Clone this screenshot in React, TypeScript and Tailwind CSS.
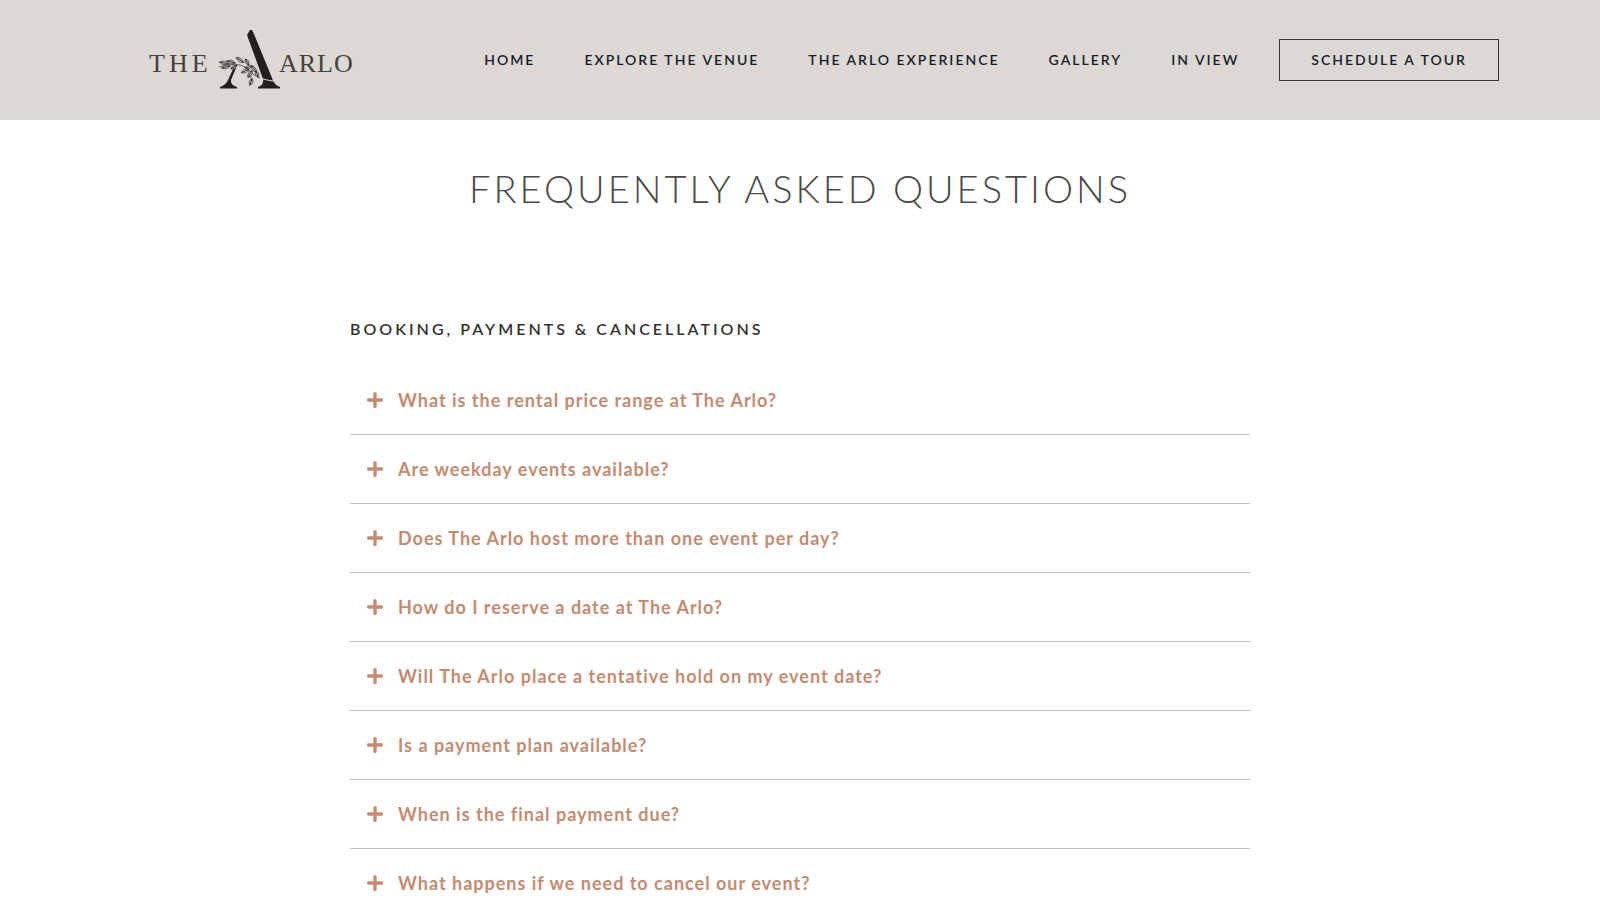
import { useState } from "react";
import { FaPlus } from "react-icons/fa";

const navItems = ["Home", "Explore the Venue", "The Arlo Experience", "Gallery", "In View"];

const questions = [
  "What is the rental price range at The Arlo?",
  "Are weekday events available?",
  "Does The Arlo host more than one event per day?",
  "How do I reserve a date at The Arlo?",
  "Will The Arlo place a tentative hold on my event date?",
  "Is a payment plan available?",
  "When is the final payment due?",
  "What happens if we need to cancel our event?",
];

// [x, y, rotation, length] of each leaf on the sprig
const leaves: [number, number, number, number][] = [
  [84, 43, 10, 9],
  [86, 47, -14, 9],
  [91, 42, 12, 9],
  [94, 47, -30, 7],
  [100, 40, 34, 9],
  [107, 42, 60, 7],
  [105, 51, -24, 8],
  [110, 54, -58, 8],
  [114, 49, 56, 8],
  [109, 47, -10, 7],
  [111, 62, -70, 7],
  [117, 54, 70, 7],
];

function Logo() {
  return (
    <svg width="220" height="80" viewBox="0 0 220 80" role="img" aria-label="The Arlo">
      <g fill="#46413d" fontFamily="'Liberation Serif', serif" fontSize="26">
        <text x="9" y="52" letterSpacing="4">THE</text>
        <text x="139" y="52" letterSpacing="1">ARLO</text>
      </g>
      <g fill="#231f1c">
        <path d="M107 15 L110 10 H112 L114 14 L132 58 Q134 65 140 67 V68.500 H118 V67 Q124 65 123 59 Z" />
        <path d="M94 47 L96 48 L91 60 Q90 65 97 67 V68.500 H80 V67 Q86 65 88 60 Z" />
      </g>
      <g fill="none" stroke="#35302c" strokeWidth="0.7">
        <path d="M115 55 Q120 59 127 60 Q133 61 139 62" stroke="#dcd8d3" strokeWidth="1" />
        <path d="M79 47 Q96 41 107 48 Q113 56 120 58" />
        <path d="M104 47 Q112 50 111 64" />
        {leaves.map(([x, y, angle, length]) => (
          <g key={`${x}-${y}`} transform={`translate(${x} ${y}) rotate(${angle})`}>
            <path
              d={`M${-length / 2} 0 Q0 -3.400 ${length / 2} 0 Q0 3.400 ${-length / 2} 0 Z`}
              fill="#dcd8d3"
            />
            <path d={`M${-length / 2} 0 H${length / 2}`} strokeWidth="0.9" />
          </g>
        ))}
      </g>
    </svg>
  );
}

export default function App() {
  const [selected, setSelected] = useState<number | null>(null);

  return (
    <div className="min-h-screen overflow-x-hidden bg-white font-['Lato',sans-serif]">
      <header className="flex min-h-[120px] items-center justify-between bg-[#dcd8d3] pr-[101px] pl-[140px]">
        <a href="#home" aria-label="The Arlo">
          <Logo />
        </a>
        <div className="flex items-center gap-10 text-sm font-semibold tracking-[2px] whitespace-nowrap text-[#161c2d] uppercase">
          <nav className="flex items-center gap-[49px]">
            {navItems.map((item) => (
              <a key={item} href="#home">
                {item}
              </a>
            ))}
          </nav>
          <a href="#tour" className="border border-[#3a3634] px-[31px] py-[10px]">
            Schedule a Tour
          </a>
        </div>
      </header>

      <main>
        <h1 className="mt-10 text-center text-[38px] leading-[56px] font-light tracking-[3px] text-[#4a4a4a] uppercase">
          Frequently Asked Questions
        </h1>

        <section className="mx-auto mt-[101px] max-w-[900px]">
          <h2 className="text-base leading-6 font-semibold tracking-[3px] text-[#333230] uppercase">
            Booking, Payments &amp; Cancellations
          </h2>
          <ul className="mt-[25px]">
            {questions.map((question, index) => (
              <li key={question} className="border-b border-[#bfbfbf]">
                <button
                  type="button"
                  aria-expanded={selected === index}
                  onClick={() => setSelected(selected === index ? null : index)}
                  className="flex w-full items-center gap-[14px] px-4 py-[22px] text-left text-lg leading-6 font-bold tracking-[1px] text-[#c48b70]"
                >
                  <FaPlus className="size-[18px]" aria-hidden="true" />
                  {question}
                </button>
              </li>
            ))}
          </ul>
        </section>
      </main>
    </div>
  );
}
